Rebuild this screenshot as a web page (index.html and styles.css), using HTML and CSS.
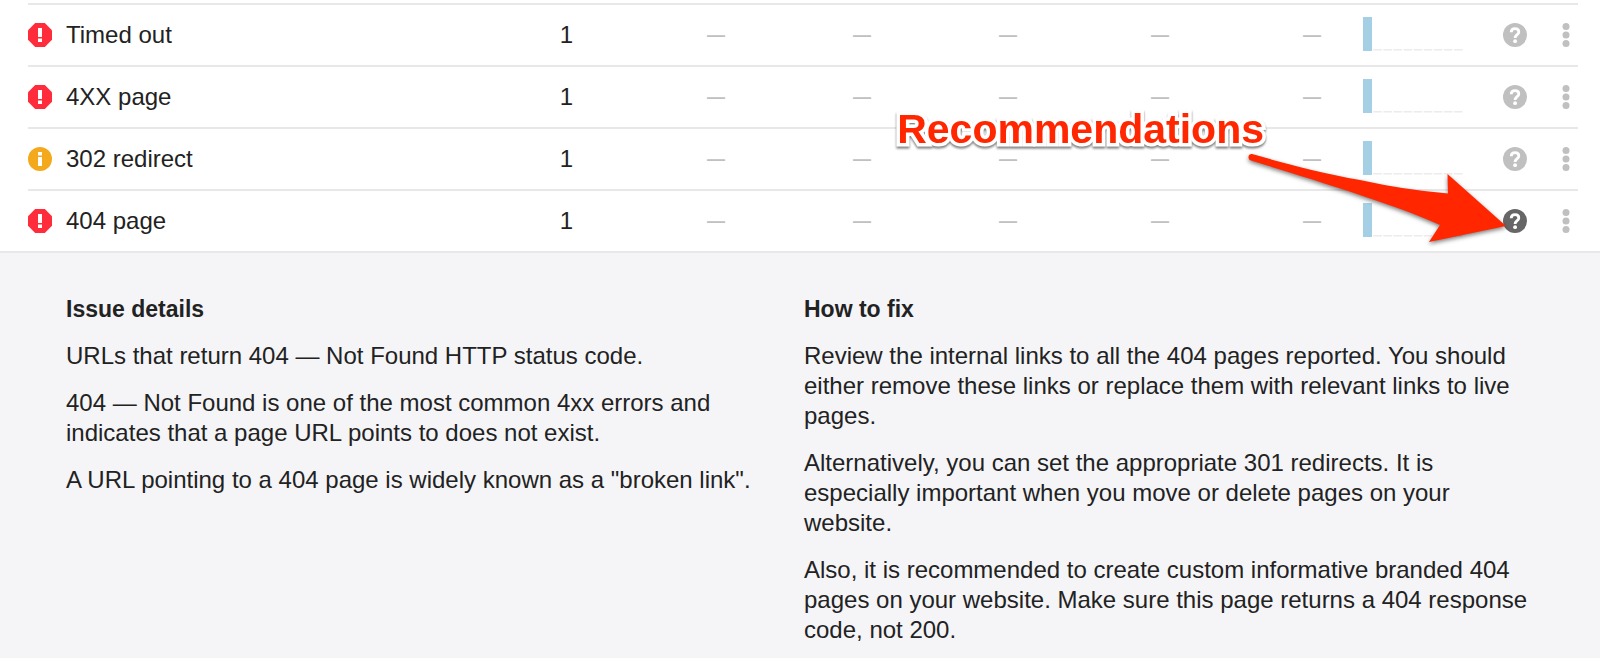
FILE: index.html
```html
<!DOCTYPE html>
<html lang="en">
<head>
    <meta charset="UTF-8">
    <meta name="viewport" content="width=device-width, initial-scale=1.0">
    <title>Site audit issues</title>
    <link rel="stylesheet" href="styles.css">
</head>
<body>

    <!-- Shared icons -->
    <svg class="sprite" aria-hidden="true">
        <symbol id="icon-error" viewBox="0 0 24 24">
            <path fill="#ff2d3b" d="M7.2 0h9.6L24 7.2v9.6L16.8 24H7.2L0 16.8V7.2z"/>
            <path fill="#fff" d="M10 5h4v9h-4zM10 15.600h4v3.400h-4z"/>
        </symbol>
        <symbol id="icon-info" viewBox="0 0 24 24">
            <circle cx="12" cy="12" r="12" fill="#f4a91c"/>
            <path fill="#fff" d="M10 5h4v3.400h-4zM10 10h4v9h-4z"/>
        </symbol>
        <symbol id="icon-help" viewBox="0 0 24 24">
            <circle cx="12" cy="12" r="12" fill="currentColor"/>
            <path fill="none" stroke="#fff" stroke-width="2.800" d="M8.200 9.200C8.300 6.800 9.800 5.700 12 5.700s3.800 1.200 3.800 3.200c0 2.600-3.700 2.800-3.700 6"/>
            <circle cx="12.100" cy="18.200" r="1.900" fill="#fff"/>
        </symbol>
        <symbol id="icon-menu" viewBox="0 0 24 24">
            <circle cx="12" cy="3.500" r="3.500" fill="currentColor"/>
            <circle cx="12" cy="12" r="3.500" fill="currentColor"/>
            <circle cx="12" cy="20.500" r="3.500" fill="currentColor"/>
        </symbol>
        <symbol id="icon-trend" viewBox="0 0 100 36">
            <path fill="#a5cfe4" d="M0 0h9v34H0z"/>
            <path stroke="#ececec" stroke-width="1.500" stroke-dasharray="8.600 1.500" d="M10.200 32.700H100"/>
        </symbol>
    </svg>

    <main class="report">
        <div class="issues">
            <table class="issues-table">
                <colgroup>
                    <col>
                    <col class="col-wide">
                    <col class="col-narrow">
                    <col class="col-narrow">
                    <col class="col-wide">
                    <col class="col-wide">
                    <col class="col-trend">
                    <col class="col-help">
                    <col class="col-menu">
                </colgroup>
                <tbody>
                    <tr>
                        <td><div class="issue"><div class="issue-name"><svg class="icon"><use href="#icon-error"/></svg>Timed out</div><span>1</span></div></td>
                        <td class="empty">—</td>
                        <td class="empty">—</td>
                        <td class="empty">—</td>
                        <td class="empty">—</td>
                        <td class="empty">—</td>
                        <td><svg class="trend"><use href="#icon-trend"/></svg></td>
                        <td><button type="button" aria-label="Help"><svg class="icon"><use href="#icon-help"/></svg></button></td>
                        <td><button type="button" aria-label="More"><svg class="icon"><use href="#icon-menu"/></svg></button></td>
                    </tr>
                    <tr>
                        <td><div class="issue"><div class="issue-name"><svg class="icon"><use href="#icon-error"/></svg>4XX page</div><span>1</span></div></td>
                        <td class="empty">—</td>
                        <td class="empty">—</td>
                        <td class="empty">—</td>
                        <td class="empty">—</td>
                        <td class="empty">—</td>
                        <td><svg class="trend"><use href="#icon-trend"/></svg></td>
                        <td><button type="button" aria-label="Help"><svg class="icon"><use href="#icon-help"/></svg></button></td>
                        <td><button type="button" aria-label="More"><svg class="icon"><use href="#icon-menu"/></svg></button></td>
                    </tr>
                    <tr>
                        <td><div class="issue"><div class="issue-name"><svg class="icon"><use href="#icon-info"/></svg>302 redirect</div><span>1</span></div></td>
                        <td class="empty">—</td>
                        <td class="empty">—</td>
                        <td class="empty">—</td>
                        <td class="empty">—</td>
                        <td class="empty">—</td>
                        <td><svg class="trend"><use href="#icon-trend"/></svg></td>
                        <td><button type="button" aria-label="Help"><svg class="icon"><use href="#icon-help"/></svg></button></td>
                        <td><button type="button" aria-label="More"><svg class="icon"><use href="#icon-menu"/></svg></button></td>
                    </tr>
                    <tr>
                        <td><div class="issue"><div class="issue-name"><svg class="icon"><use href="#icon-error"/></svg>404 page</div><span>1</span></div></td>
                        <td class="empty">—</td>
                        <td class="empty">—</td>
                        <td class="empty">—</td>
                        <td class="empty">—</td>
                        <td class="empty">—</td>
                        <td><svg class="trend"><use href="#icon-trend"/></svg></td>
                        <td><button type="button" class="active" aria-label="Help" aria-expanded="true"><svg class="icon"><use href="#icon-help"/></svg></button></td>
                        <td><button type="button" aria-label="More"><svg class="icon"><use href="#icon-menu"/></svg></button></td>
                    </tr>
                </tbody>
            </table>

            <!-- Callout over the table -->
            <div class="callout">Recommendations</div>
            <svg class="callout-arrow" viewBox="0 0 270 100" aria-hidden="true">
                <path fill="#ff2600" d="M12 4C50 15 86 24 120 30Q165 40 208 43.500L207.500 24L266 76L189 92L200 75C165 58 75 30 11 10.500A3.300 3.300 0 0 1 12 4z"/>
            </svg>
        </div>

        <!-- Expanded details of the 404 issue -->
        <section class="details">
            <div>
                <h2>Issue details</h2>
                <p>URLs that return 404 — Not Found HTTP status code.</p>
                <p>404 — Not Found is one of the most common 4xx errors and indicates that a page URL points to does not exist.</p>
                <p>A URL pointing to a 404 page is widely known as a "broken link".</p>
            </div>
            <div>
                <h2>How to fix</h2>
                <p>Review the internal links to all the 404 pages reported. You should either remove these links or replace them with relevant links to live pages.</p>
                <p>Alternatively, you can set the appropriate 301 redirects. It is especially important when you move or delete pages on your website.</p>
                <p>Also, it is recommended to create custom informative branded 404 pages on your website. Make sure this page returns a 404 response code, not 200.</p>
            </div>
        </section>
    </main>

</body>
</html>
```

FILE: styles.css
```css
:root {
    --text-color: #222;
    --muted-color: #c0c0c0;
    --line-color: #e8e8e8;
    --panel-bg: #f5f5f8;
    --callout-color: #ff2600;
}

* {
    box-sizing: border-box;
}

body {
    margin: 0;
    font-family: "Liberation Sans", Arial, sans-serif;
    font-size: 24px;
    line-height: 30px;
    color: var(--text-color);
    background: #fff;
}

.sprite {
    display: none;
}

.report {
    display: flex;
    flex-direction: column;
    min-height: 100vh;
}

/* Issues table */
.issues {
    position: relative;
    padding: 3px 22px 0 28px;
}

.issues-table {
    width: 100%;
    table-layout: fixed;
    border-collapse: separate;
    border-spacing: 0;
}

.issues-table td {
    height: 62px;
    padding: 0;
    border-top: 2px solid var(--line-color);
    text-align: right;
    vertical-align: middle;
}

.col-wide {
    width: 152px;
}

.col-narrow {
    width: 146px;
}

.col-trend {
    width: 142px;
}

.col-help {
    width: 64px;
}

.col-menu {
    width: 51px;
}

.issue,
.issue-name {
    display: flex;
    align-items: center;
}

.issue {
    justify-content: space-between;
}

.issue-name {
    gap: 14px;
}

.issues-table .empty {
    font-size: 18px;
    font-weight: bold;
    color: var(--muted-color);
}

.icon {
    display: block;
    width: 24px;
    height: 24px;
}

.trend {
    display: block;
    width: 100px;
    height: 36px;
    margin-left: auto;
}

button {
    display: block;
    margin-left: auto;
    padding: 0;
    border: none;
    background: none;
    color: var(--muted-color);
    cursor: pointer;
}

button:hover,
button.active {
    color: #666;
}

/* Callout */
.callout {
    position: absolute;
    top: 105px;
    right: 336px;
    font-size: 41px;
    font-weight: bold;
    line-height: 48px;
    color: var(--callout-color);
    -webkit-text-stroke: 7px #fff;
    paint-order: stroke fill;
    filter: drop-shadow(0 2px 1px rgba(0, 0, 0, 0.5));
}

.callout-arrow {
    position: absolute;
    top: 150px;
    right: 90px;
    width: 270px;
    height: 100px;
    filter: drop-shadow(0 2px 2px rgba(0, 0, 0, 0.5));
    pointer-events: none;
}

/* Details panel */
.details {
    flex: 1;
    display: grid;
    grid-template-columns: 1fr 1fr;
    gap: 10px;
    padding: 41px 68px 12px 66px;
    border-top: 2px solid var(--line-color);
    background: var(--panel-bg);
}

.details h2 {
    margin: 0;
    font-size: 23px;
    line-height: 30px;
}

.details p {
    margin: 17px 0 0;
}
```
